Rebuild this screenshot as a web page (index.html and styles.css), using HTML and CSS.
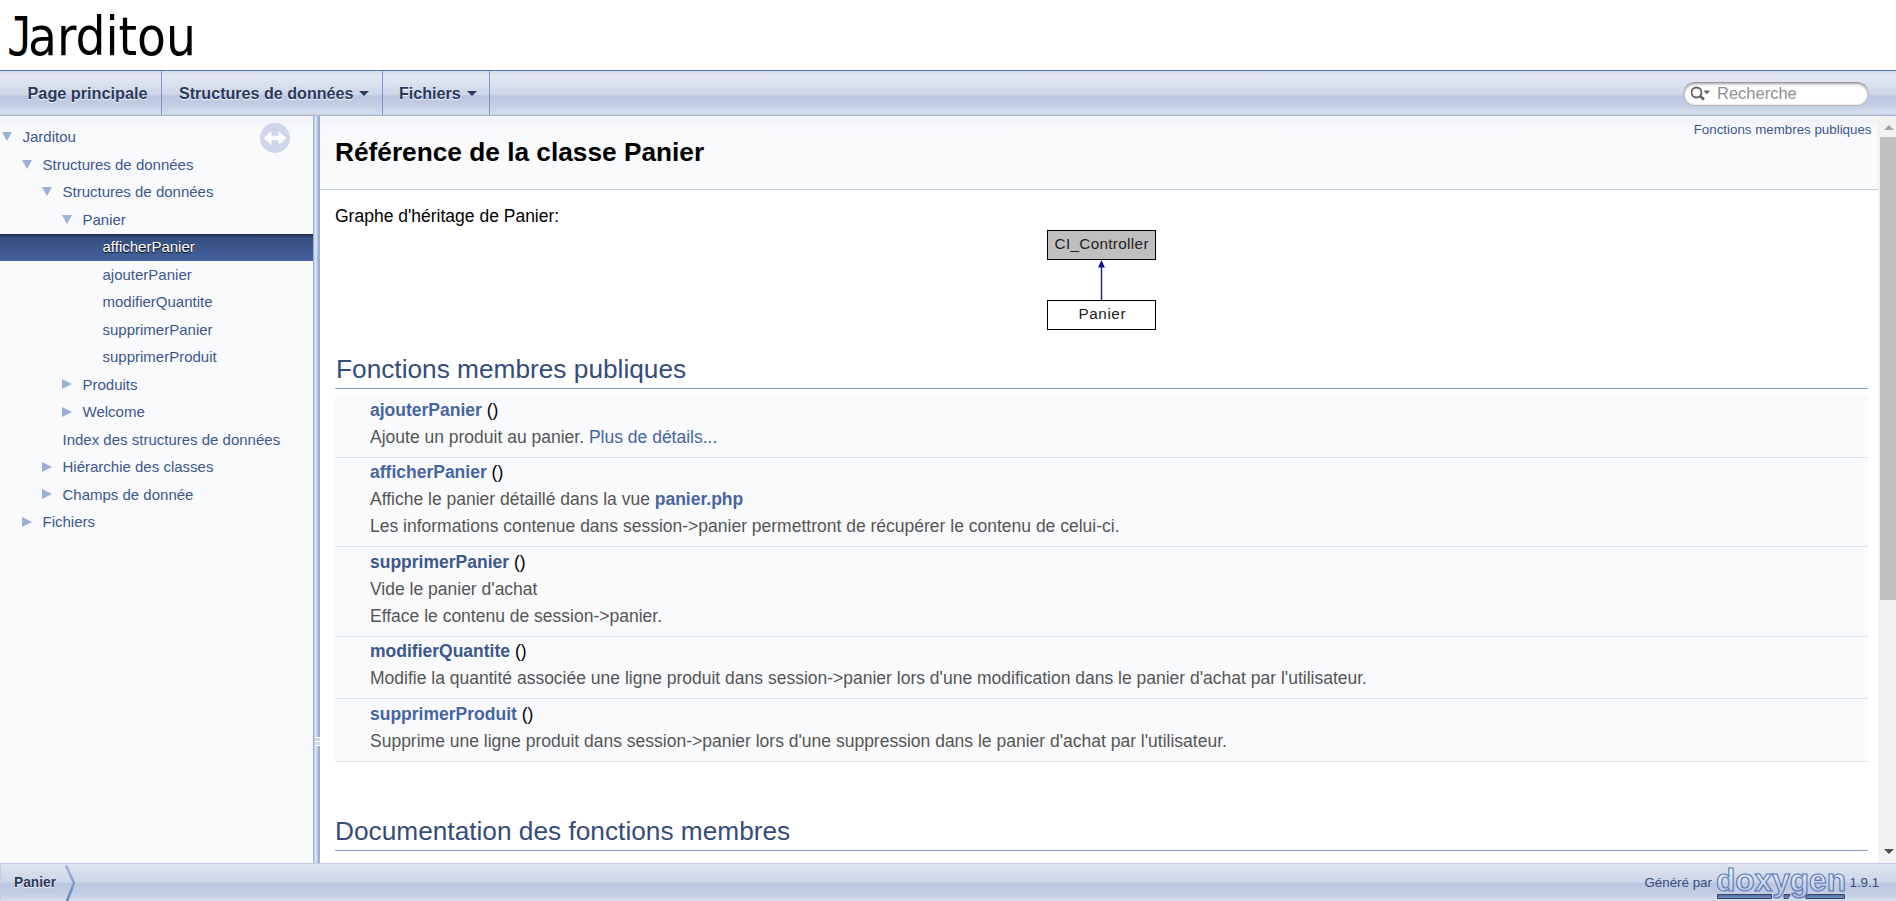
FILE: index.html
```html
<!DOCTYPE html>
<html lang="fr">
<head>
<meta charset="utf-8">
<title>Jarditou: Référence de la classe Panier</title>
<link rel="stylesheet" href="styles.css">
</head>
<body>
<header class="title-area"><div class="project-name"><span class="initial">J</span>arditou</div></header>
<nav class="navbar">
  <ul class="menu">
    <li class="menu-item first">Page principale</li>
    <li class="menu-item second">Structures de données<span class="caret"></span></li>
    <li class="menu-item third">Fichiers<span class="caret"></span></li>
  </ul>
  <div class="search">
    <svg class="search-icon" width="22" height="16" viewBox="0 0 22 16"><circle cx="5.500" cy="6.5" r="5" fill="none" stroke="#606060" stroke-width="1.8"/><path d="M8.5 9.5L13 13.5" stroke="#606060" stroke-width="2.6"/><path d="M12.5 4.5h6.5l-3.2 3.8z" fill="#606060"/></svg>
    <span class="search-text">Recherche</span>
  </div>
</nav>
<main class="main">
  <aside class="side">
    <svg class="sync" width="30" height="30" viewBox="0 0 30 30"><circle cx="15" cy="15" r="15" fill="#ced7ea"/><path d="M3.5 15L11.5 8v4.7h7V8l8 7-8 7v-4.7h-7V22z" fill="#fbfcfd"/></svg>
    <ul class="tree">
      <li class="node d0"><i class="down"></i>Jarditou</li>
      <li class="node d1"><i class="down"></i>Structures de données</li>
      <li class="node d2"><i class="down"></i>Structures de données</li>
      <li class="node d3"><i class="down"></i>Panier</li>
      <li class="node d4 selected">afficherPanier</li>
      <li class="node d4">ajouterPanier</li>
      <li class="node d4">modifierQuantite</li>
      <li class="node d4">supprimerPanier</li>
      <li class="node d4">supprimerProduit</li>
      <li class="node d3"><i class="right"></i>Produits</li>
      <li class="node d3"><i class="right"></i>Welcome</li>
      <li class="node d2 leaf">Index des structures de données</li>
      <li class="node d2"><i class="right"></i>Hiérarchie des classes</li>
      <li class="node d2"><i class="right"></i>Champs de donnée</li>
      <li class="node d1"><i class="right"></i>Fichiers</li>
    </ul>
  </aside>
  <div class="splitter"><div class="grip"></div></div>
  <section class="doc">
    <div class="doc-header">
      <h1 class="doc-title">Référence de la classe Panier</h1>
      <a class="summary">Fonctions membres publiques</a>
    </div>
    <div class="contents">
      <p class="caption">Graphe d'héritage de Panier:</p>
      <svg class="graph" width="110" height="101" viewBox="0 0 110 101">
        <rect x=".5" y=".5" width="108" height="29" fill="#bfbfbf" stroke="#000"/>
        <rect x=".5" y="70.5" width="108" height="29" fill="#fff" stroke="#000"/>
        <path d="M54.5 36v34" stroke="#191990" stroke-width="1.4"/>
        <path d="M54.500 30l3.4 7.500h-6.800z" fill="#0b0ba0"/>
        <text class="graph-text" x="7.500" y="18.500" textLength="94">CI_Controller</text>
        <text class="graph-text" x="31.500" y="88.500" textLength="47">Panier</text>
      </svg>
      <h2 class="group">Fonctions membres publiques</h2>
      <div class="members">
        <div class="member"><div><b>ajouterPanier</b> ()</div><div class="desc">Ajoute un produit au panier. <a>Plus de détails...</a></div></div>
        <div class="member tall"><div><b>afficherPanier</b> ()</div><div class="desc">Affiche le panier détaillé dans la vue <b>panier.php</b></div><div class="desc">Les informations contenue dans session-&gt;panier permettront de récupérer le contenu de celui-ci.</div></div>
        <div class="member tall"><div><b class="dark">supprimerPanier</b> ()</div><div class="desc">Vide le panier d'achat</div><div class="desc">Efface le contenu de session-&gt;panier.</div></div>
        <div class="member"><div><b class="dark">modifierQuantite</b> ()</div><div class="desc">Modifie la quantité associée une ligne produit dans session-&gt;panier lors d'une modification dans le panier d'achat par l'utilisateur.</div></div>
        <div class="member"><div><b>supprimerProduit</b> ()</div><div class="desc">Supprime une ligne produit dans session-&gt;panier lors d'une suppression dans le panier d'achat par l'utilisateur.</div></div>
      </div>
      <h2 class="group details">Documentation des fonctions membres</h2>
    </div>
  </section>
  <div class="scrollbar"><i class="arrow-up"></i><div class="thumb"></div><i class="arrow-down"></i></div>
</main>
<footer class="footer">
  <span class="crumb">Panier</span>
  <svg class="chevron" width="12" height="37" viewBox="0 0 12 37"><defs><linearGradient id="cv" x1="0" y1="0" x2="0" y2="1"><stop offset="0" stop-color="#a3b4d8"/><stop offset="1" stop-color="#6080bd"/></linearGradient></defs><path d="M1 1.5L9 19L2 37" fill="none" stroke="url(#cv)" stroke-width="2.4"/></svg>
  <span class="generated">Généré par</span>
  <svg class="logo" width="130" height="37" viewBox="0 0 130 37">
    <defs>
      <linearGradient id="lg" gradientUnits="userSpaceOnUse" x1="0" y1="4" x2="0" y2="34"><stop offset="0" stop-color="#f2f5fa"/><stop offset="1" stop-color="#a9bbdc"/></linearGradient>
      <linearGradient id="bar" x1="0" y1="0" x2="0" y2="1"><stop offset="0" stop-color="#4c69a8"/><stop offset="1" stop-color="#7c98cd"/></linearGradient>
    </defs>
    <path d="M1.5 30.5h54v4h-54zM68 30.5h6l-2 4h-4zM90 30.5h38.500v4H90z" fill="url(#bar)" stroke="#39435c" stroke-width="1"/>
    <text class="logo-text" x="0" y="27" textLength="130" lengthAdjust="spacingAndGlyphs">doxygen</text>
  </svg>
  <span class="version">1.9.1</span>
</footer>
</body>
</html>
```

FILE: styles.css
```css
* { box-sizing: border-box; }
html, body { height: 100%; }
body {
  margin: 0;
  overflow: hidden;
  display: flex;
  flex-direction: column;
  background: #fff;
  color: #000;
  font: 17.5px/27px "Liberation Sans", Arial, sans-serif;
}
ul { list-style: none; margin: 0; padding: 0; }

/* Project banner */
.title-area { height: 70px; flex: none; }
.project-name {
  padding: 6px 0 0 7px;
  font: 52.5px/62px "DejaVu Sans Condensed", "DejaVu Sans", sans-serif;
  font-stretch: condensed;
}
.initial {
  display: inline-block;
  width: 21px;
  font-family: "DejaVu Sans Mono", monospace;
  transform: scaleX(.82);
  transform-origin: left;
}

/* Navigation bar */
.navbar {
  height: 46px;
  flex: none;
  display: flex;
  justify-content: space-between;
  border-top: 1px solid #5373b4;
  border-bottom: 1px solid #a5b4d8;
  background: linear-gradient(#d3dbea 0, #e4e9f3 12%, #cdd6e8 53%, #bbc7e0 57%, #c2cde4 78%, #d6deed 96%, #c3cee4 100%);
}
.menu { display: flex; }
.menu-item {
  height: 44px;
  display: flex;
  align-items: center;
  border-right: 1px solid #7f97c9;
  color: #283a5d;
  font-size: 16.1px;
  font-weight: bold;
  text-shadow: 0 1px 1px rgba(255, 255, 255, .9);
  white-space: nowrap;
}
.first { width: 162px; padding-left: 27.5px; font-size: 16.25px; }
.second { width: 221px; padding-left: 17px; }
.third { width: 107px; padding-left: 16px; }
.caret {
  margin-left: 6px;
  border: 5px solid transparent;
  border-top-color: #283a5d;
  border-bottom: 0;
}
.search {
  width: 186px;
  height: 24px;
  margin: 11px 27px 0 0;
  padding: 0 7px;
  display: flex;
  align-items: center;
  border-radius: 12px;
  background: #fff;
  border: 1px solid #b5b5b5;
  border-top-color: #999;
  box-shadow: inset 0 1px 3px rgba(0, 0, 0, .4);
}
.search-text { margin-left: 4px; padding-bottom: 2px; color: #909090; font-size: 16.5px; }

/* Tree view */
.main { height: 747px; flex: none; display: flex; }
.side {
  width: 313px;
  position: relative;
  padding-top: 7.7px;
  background: linear-gradient(#fff 0, #eff2f8 2px, #f9fafc 15px);
}
.sync { position: absolute; left: 260px; top: 7px; }
.node {
  height: 27.5px;
  padding-bottom: 1px;
  display: flex;
  align-items: center;
  color: #3d578c;
  font-size: 15px;
  white-space: nowrap;
}
.node i { width: 20.5px; flex: none; }
.node i::before { content: ""; display: block; width: 0; border: 5px solid transparent; }
.node .down::before { border-width: 9px 5px 0; border-top-color: #9cafd4; }
.node .right::before { border-width: 5px 0 5px 10px; border-left-color: #9cafd4; }
.d0 { padding-left: 2px; }
.d1 { padding-left: 22px; }
.d2 { padding-left: 42px; }
.d3 { padding-left: 62px; }
.d4 { padding-left: 102.5px; }
.leaf { padding-left: 62.5px; }
.selected {
  color: #fff;
  background: linear-gradient(#1c2a45 0, #344d80 4px, #3d578c 50%, #4660a0 100%);
  text-shadow: 0 1px 1px #000;
}
.splitter {
  width: 7px;
  background: linear-gradient(90deg, #9cafd4 0 1px, #c5d0e6 1px 2px, #e0e6f1 2px 3px, #d0d9eb 3px 4px, #b9c6e0 4px 5px, #9cafd4 5px 7px);
}
.grip {
  width: 5px;
  height: 9px;
  margin: 621px 0 0 2px;
  background: repeating-linear-gradient(#fff 0 1px, #d0daec 1px 4px);
}

/* Document */
.doc { flex: 1; min-width: 0; overflow: hidden; }
.doc-header {
  height: 74px;
  display: flex;
  justify-content: space-between;
  border-bottom: 1px solid #c4cfe5;
  background: linear-gradient(#fff 0, #eff2f8 2px, #f9fafc 15px);
}
.doc-title { margin: 21px 0 0 15px; font-size: 26.25px; line-height: 30px; }
.summary { margin: 7px 6.5px 0 0; color: #3d578c; font-size: 13.33px; line-height: 14px; }
.contents { padding: 13px 10px 0 15px; }
.caption { margin: 0; height: 27px; }
.graph { display: block; margin: 0 auto; position: relative; left: .5px; }
.graph-text { font: 15.3px "Liberation Sans", Arial, sans-serif; fill: #222; }
.group {
  margin: 23px 0 0;
  height: 35px;
  padding-left: 1px;
  border-bottom: 1px solid #879ecb;
  color: #354c7b;
  font-size: 26.25px;
  font-weight: normal;
  line-height: 30px;
}
.members { margin-top: 6px; color: #000; }
.member {
  height: 62.5px;
  padding: 1.6px 0 0 35px;
  background: #f9fafc;
  border-bottom: 1px solid #dee4f0;
  white-space: nowrap;
}
.tall { height: 89.5px; }
.member b, .member a { color: #4665a2; }
.member .dark { color: #3d578c; }
.desc { color: #555; }
.details { margin-top: 54px; padding-left: 0; }

.scrollbar {
  width: 18px;
  display: flex;
  flex-direction: column;
  background: #f1f1f1;
}
.arrow-up { margin: 9px 0 0 6px; border: 5px solid transparent; border-top: 0; border-bottom-color: #a3a3a3; width: 0; }
.thumb { height: 463px; margin: 7px 0 0 2px; background: #c1c1c1; }
.arrow-down { margin: auto 0 9px 6px; border: 5px solid transparent; border-bottom: 0; border-top-color: #505050; width: 0; }

/* Footer */
.footer {
  height: 38px;
  flex: none;
  display: flex;
  border-top: 1px solid #c2cde4;
  border-left: 1px solid #c2cde4;
  background: linear-gradient(#dee4ef 0, #cdd6e8 48%, #bbc7e0 53%, #c2cde4 78%, #d6deed 100%);
  color: #364d7c;
  font-size: 13.33px;
  line-height: 37px;
}
.crumb { width: 64px; padding-left: 13px; color: #283a5d; font-size: 13.75px; font-weight: bold; text-shadow: 0 1px 1px rgba(255, 255, 255, .9); }
.generated { margin-left: auto; width: 71px; white-space: nowrap; }
.logo { display: block; overflow: visible; }
.logo-text { font: bold 31px "Liberation Sans", Arial, sans-serif; fill: url(#lg); stroke: #5a79b5; stroke-width: 1.1; }
.version { width: 50.5px; padding-left: 4px; }
```
